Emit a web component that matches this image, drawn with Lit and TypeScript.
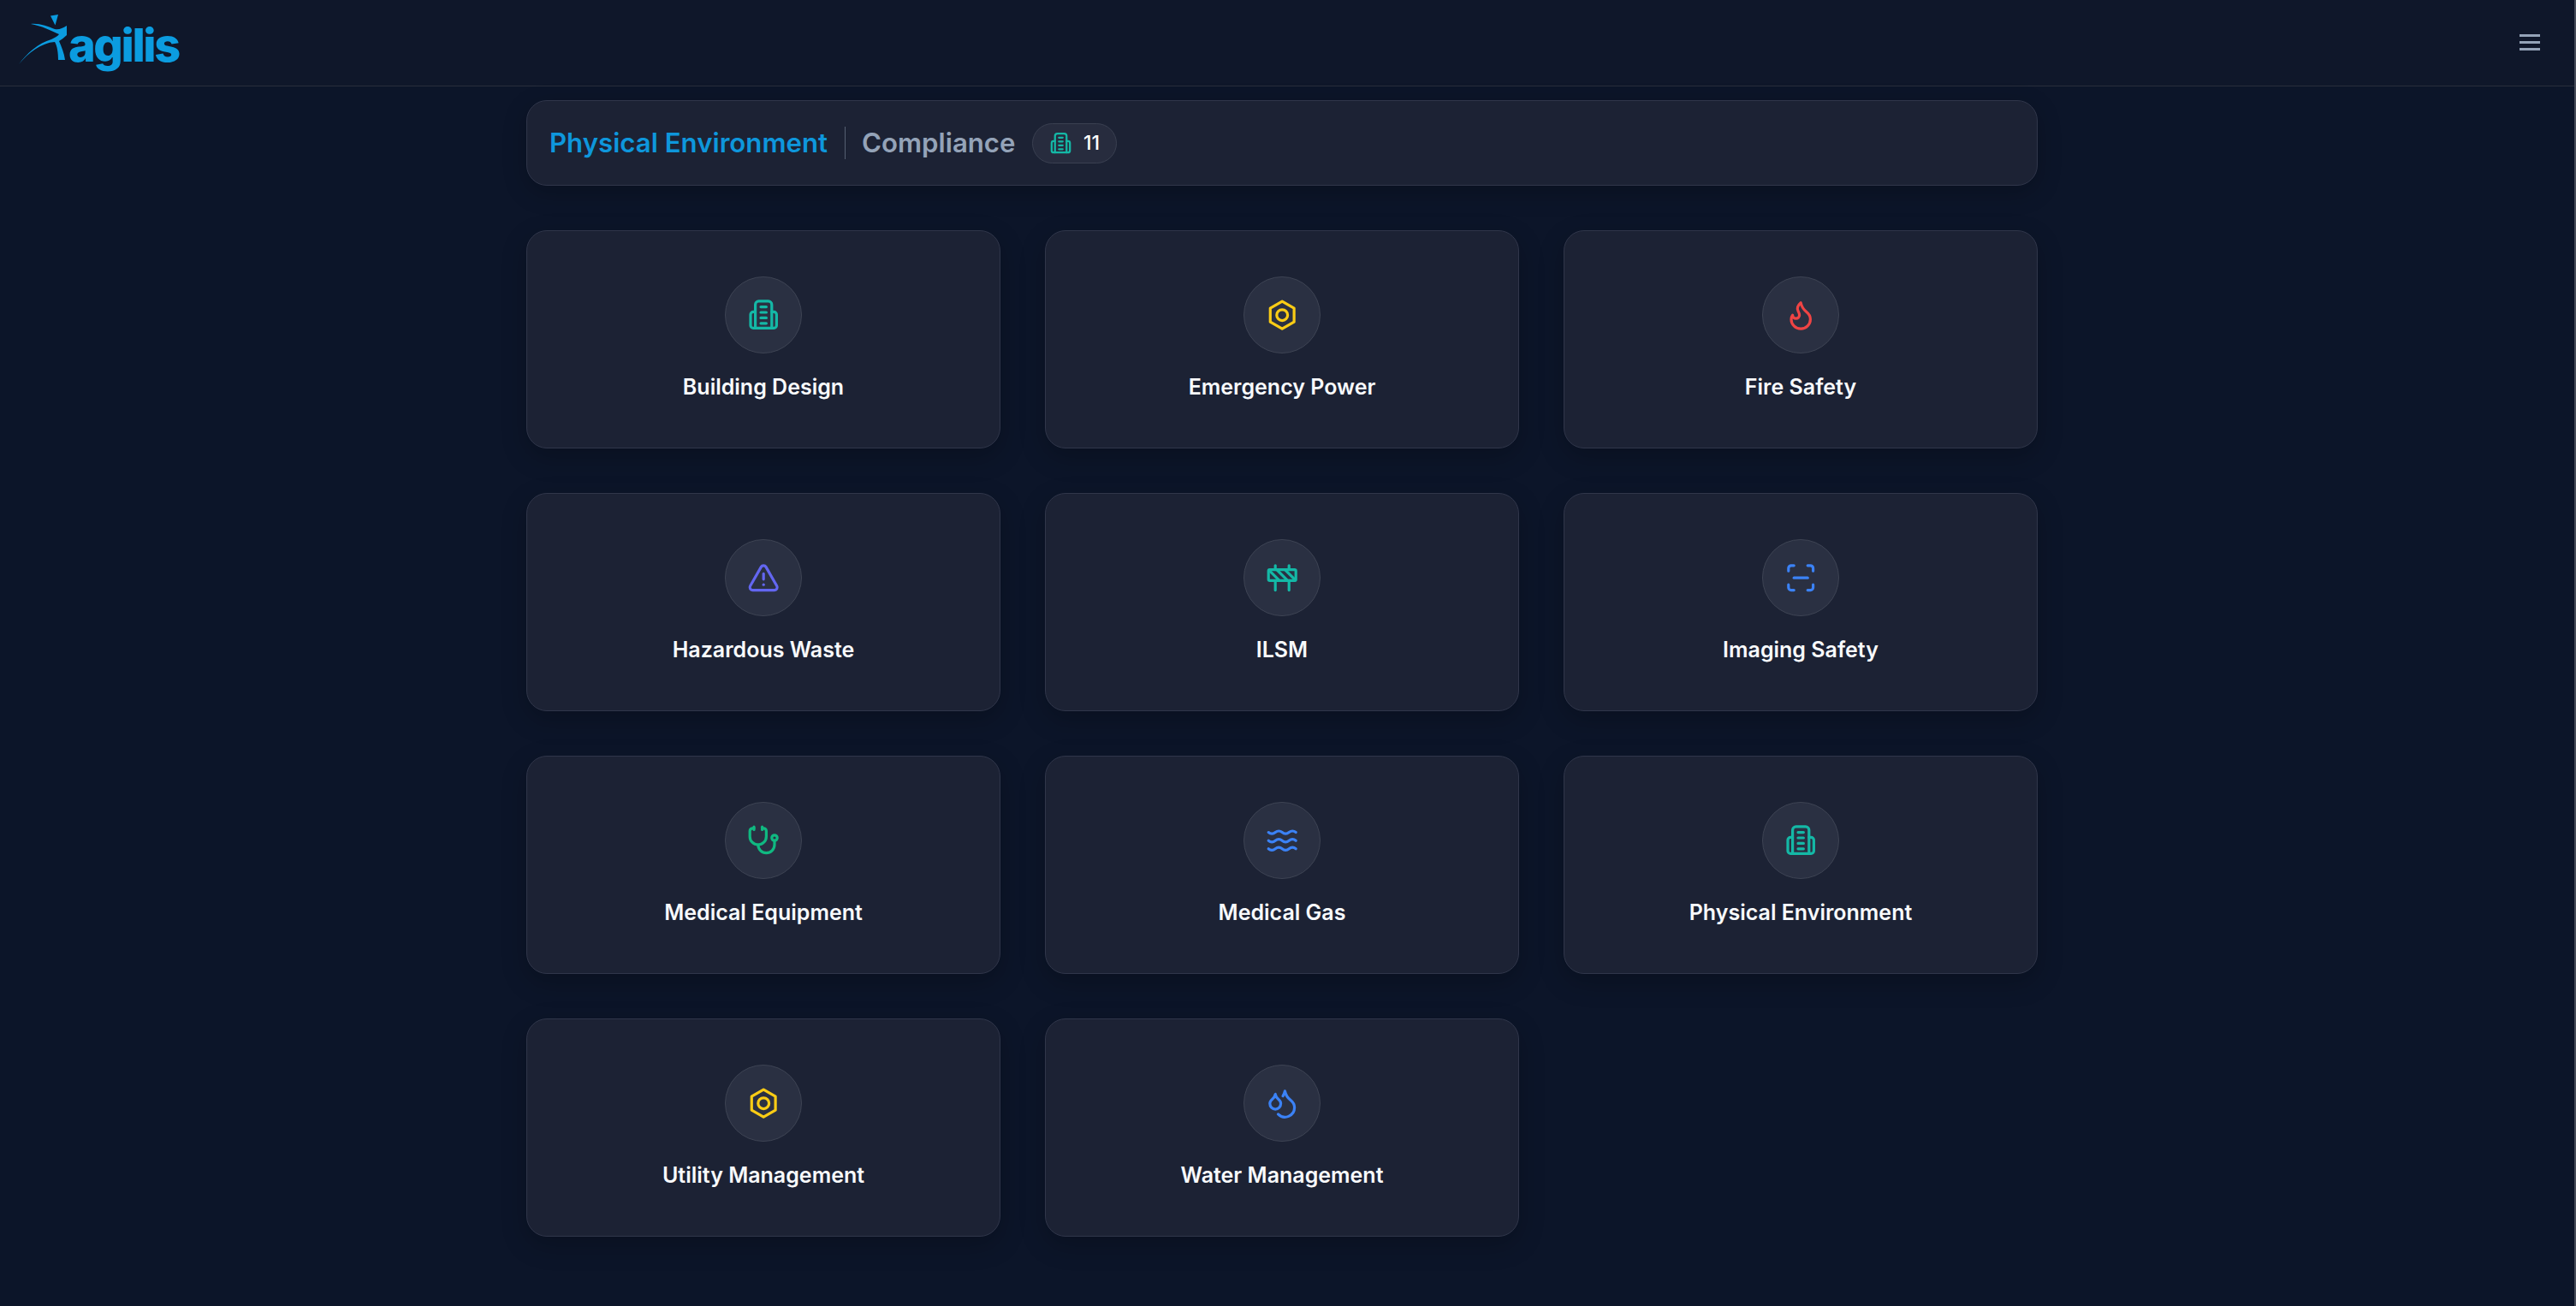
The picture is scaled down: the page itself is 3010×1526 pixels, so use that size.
import { LitElement, html, css, svg } from 'lit';
import { customElement } from 'lit/decorators.js';

const buildingIcon = svg`<path d="M6 21.5V4.3a2.5 2.5 0 0 1 2.5-2.5h7A2.5 2.5 0 0 1 18 4.3v17.2" /><path d="M6 9.6H4.5a2 2 0 0 0-2 2v7.9a2 2 0 0 0 2 2h15a2 2 0 0 0 2-2v-7.9a2 2 0 0 0-2-2H18" /><path d="M10 6h4M10 10h4M10 14h4M10 18h4" />`;
const nutIcon = svg`<path d="M12 2l8.7 5v10L12 22l-8.7-5V7z" /><circle cx="12" cy="12" r="4" />`;

const icons: Record<string, unknown> = {
  building: buildingIcon,
  nut: nutIcon,
  flame: svg`<path d="M8.5 14.5A2.5 2.5 0 0 0 11 12c0-1.38-.5-2-1-3-1.072-2.143-.224-4.054 2-6 .5 2.5 2 4.9 4 6.5 2 1.6 3 3.5 3 5.5a7 7 0 1 1-14 0c0-1.153.433-2.294 1-3a2.5 2.5 0 0 0 2.5 2.5z" />`,
  alert: svg`<path d="m21.73 18-8-14a2 2 0 0 0-3.48 0l-8 14A2 2 0 0 0 4 21h16a2 2 0 0 0 1.73-3" /><path d="M12 9v4" /><path d="M12 17h.01" />`,
  construction: svg`<rect x="2" y="6" width="20" height="8" rx="1" /><path d="M17 14v7" /><path d="M7 14v7" /><path d="M17 3v3" /><path d="M7 3v3" /><path d="M10 14 2.3 6.3" /><path d="m14 6 7.7 7.7" /><path d="m8 6 8 8" />`,
  scan: svg`<path d="M3 7V5a2 2 0 0 1 2-2h2" /><path d="M17 3h2a2 2 0 0 1 2 2v2" /><path d="M21 17v2a2 2 0 0 1-2 2h-2" /><path d="M7 21H5a2 2 0 0 1-2-2v-2" /><path d="M7 12h10" />`,
  stethoscope: svg`<path d="M11 2v2" /><path d="M5 2v2" /><path d="M5 3H4a2 2 0 0 0-2 2v4a6 6 0 0 0 12 0V5a2 2 0 0 0-2-2h-1" /><path d="M8 15a6 6 0 0 0 12 0v-3" /><circle cx="20" cy="10" r="2" />`,
  waves: svg`<path d="M2 6c.6.5 1.2 1 2.5 1C7 7 7 5 9.5 5c2.6 0 2.4 2 5 2 2.5 0 2.5-2 5-2 1.3 0 1.9.5 2.5 1" /><path d="M2 12c.6.5 1.2 1 2.5 1 2.5 0 2.5-2 5-2 2.6 0 2.4 2 5 2 2.5 0 2.5-2 5-2 1.3 0 1.9.5 2.5 1" /><path d="M2 18c.6.5 1.2 1 2.5 1 2.5 0 2.5-2 5-2 2.6 0 2.4 2 5 2 2.5 0 2.5-2 5-2 1.3 0 1.9.5 2.5 1" />`,
  droplets: svg`<path d="M7 16.3c2.2 0 4-1.83 4-4.05 0-1.16-.57-2.26-1.71-3.19S7.29 6.75 7 5.3c-.29 1.45-1.14 2.84-2.29 3.76S3 11.1 3 12.25c0 2.22 1.8 4.05 4 4.05z" /><path d="M12.56 6.6A10.97 10.97 0 0 0 14 3.02c.5 2.5 2 4.9 4 6.5s3 3.5 3 5.5a6.98 6.98 0 0 1-11.91 4.97" />`,
};

const cards = [
  { label: 'Building Design', icon: 'building', tone: 'teal' },
  { label: 'Emergency Power', icon: 'nut', tone: 'yellow' },
  { label: 'Fire Safety', icon: 'flame', tone: 'red' },
  { label: 'Hazardous Waste', icon: 'alert', tone: 'indigo' },
  { label: 'ILSM', icon: 'construction', tone: 'teal' },
  { label: 'Imaging Safety', icon: 'scan', tone: 'blue' },
  { label: 'Medical Equipment', icon: 'stethoscope', tone: 'emerald' },
  { label: 'Medical Gas', icon: 'waves', tone: 'blue' },
  { label: 'Physical Environment', icon: 'building', tone: 'teal' },
  { label: 'Utility Management', icon: 'nut', tone: 'yellow' },
  { label: 'Water Management', icon: 'droplets', tone: 'blue' },
];

@customElement('app-root')
export class AppRoot extends LitElement {
  static styles = css`
    :host {
      display: block;
      box-sizing: border-box;
      height: 1526px;
      overflow: hidden;
      background: #0c1529;
      border-right: 2px solid #474c59;
      font-family: Inter, 'Liberation Sans', sans-serif;
    }

    header {
      display: flex;
      align-items: center;
      justify-content: space-between;
      box-sizing: border-box;
      height: 101px;
      padding: 0 40px 0 22px;
      background: #0f172a;
      border-bottom: 1px solid #282e3c;
    }

    .logo {
      display: flex;
      align-items: flex-start;
      height: 60px;
      margin-top: -10px;
      color: #0b9ce0;
    }

    .logo svg {
      width: 58px;
      height: 60px;
      fill: currentColor;
    }

    .logo span {
      font-size: 54px;
      font-weight: 800;
      line-height: 60px;
      letter-spacing: -2.4px;
      margin-top: 8px;
    }

    .menu {
      display: flex;
      flex-direction: column;
      gap: 5px;
      width: 24px;
      margin-bottom: 2px;
    }

    .menu i {
      display: block;
      height: 3px;
      background: #94a3b8;
    }

    main {
      display: flex;
      flex-direction: column;
      align-items: center;
      padding: 16px 12px 0 0;
    }

    .title-bar {
      display: flex;
      align-items: center;
      gap: 19.5px;
      box-sizing: border-box;
      width: 1766px;
      height: 100px;
      padding: 0 26px;
      margin-bottom: 52px;
      background: #1c2234;
      border: 1px solid #30364a;
      border-radius: 24px;
      box-shadow: 0 8px 28px rgba(0, 0, 0, 0.22);
    }

    .title {
      font-size: 31.2px;
      font-weight: 600;
      color: #0e97dc;
    }

    .divider {
      width: 1px;
      height: 38px;
      background: #566072;
    }

    .subtitle {
      font-size: 31.2px;
      font-weight: 600;
      color: #94a3b8;
    }

    .pill {
      display: flex;
      align-items: center;
      gap: 13px;
      box-sizing: border-box;
      height: 47px;
      padding: 0 19px;
      background: #272c3e;
      border: 1px solid #3a4051;
      border-radius: 24px;
      font-size: 23px;
      font-weight: 500;
      color: #fff;
    }

    .pill svg {
      width: 27px;
      height: 27px;
    }

    .grid {
      display: grid;
      grid-template-columns: repeat(3, 554px);
      grid-auto-rows: 255px;
      gap: 52px;
    }

    .card {
      display: flex;
      flex-direction: column;
      align-items: center;
      box-sizing: border-box;
      padding-top: 53px;
      background: #1c2234;
      border: 1px solid #30364a;
      border-radius: 24px;
      box-shadow: 0 10px 30px rgba(0, 0, 0, 0.22);
    }

    .circle {
      display: flex;
      align-items: center;
      justify-content: center;
      box-sizing: border-box;
      width: 90px;
      height: 90px;
      border-radius: 50%;
      background: #2a3042;
      border: 1px solid #3e4454;
    }

    .circle svg {
      width: 38.4px;
      height: 38.4px;
    }

    svg.icon {
      fill: none;
      stroke: currentColor;
      stroke-width: 2;
      stroke-linecap: round;
      stroke-linejoin: round;
    }

    .label {
      margin-top: 21px;
      font-size: 25px;
      font-weight: 600;
      line-height: 36px;
      color: #f8fafc;
    }

    .teal {
      color: #14b8a6;
    }

    .yellow {
      color: #facc15;
    }

    .red {
      color: #ef4444;
    }

    .indigo {
      color: #6366f1;
    }

    .blue {
      color: #3b82f6;
    }

    .emerald {
      color: #10b981;
    }
  `;

  renderIcon(name: string, tone: string) {
    return html`<svg class="icon ${tone}" viewBox="0 0 24 24">${icons[name]}</svg>`;
  }

  render() {
    return html`
      <header>
        <div class="logo">
          <svg viewBox="24 15 58 60">
            <path d="M61 18.5 70 17 66.5 29.5z" />
            <path
              d="M38 28C48 27 58 31 66 34c5 1 9-1 14-4v11c-3 3-6 5-9 7 3 7 6 14 7 22h-8c0-8-1-16-4-21C50 50 35 62 24 75c9-12 23-25 38-29 4-2 8-4 9-6-9-4-21-10-33-12z"
            />
          </svg>
          <span>agilis</span>
        </div>
        <div class="menu"><i></i><i></i><i></i></div>
      </header>
      <main>
        <div class="title-bar">
          <span class="title">Physical Environment</span>
          <span class="divider"></span>
          <span class="subtitle">Compliance</span>
          <span class="pill">${this.renderIcon('building', 'teal')}11</span>
        </div>
        <div class="grid">
          ${cards.map(
            (card) => html`
              <div class="card">
                <div class="circle">${this.renderIcon(card.icon, card.tone)}</div>
                <div class="label">${card.label}</div>
              </div>
            `,
          )}
        </div>
      </main>
    `;
  }
}
